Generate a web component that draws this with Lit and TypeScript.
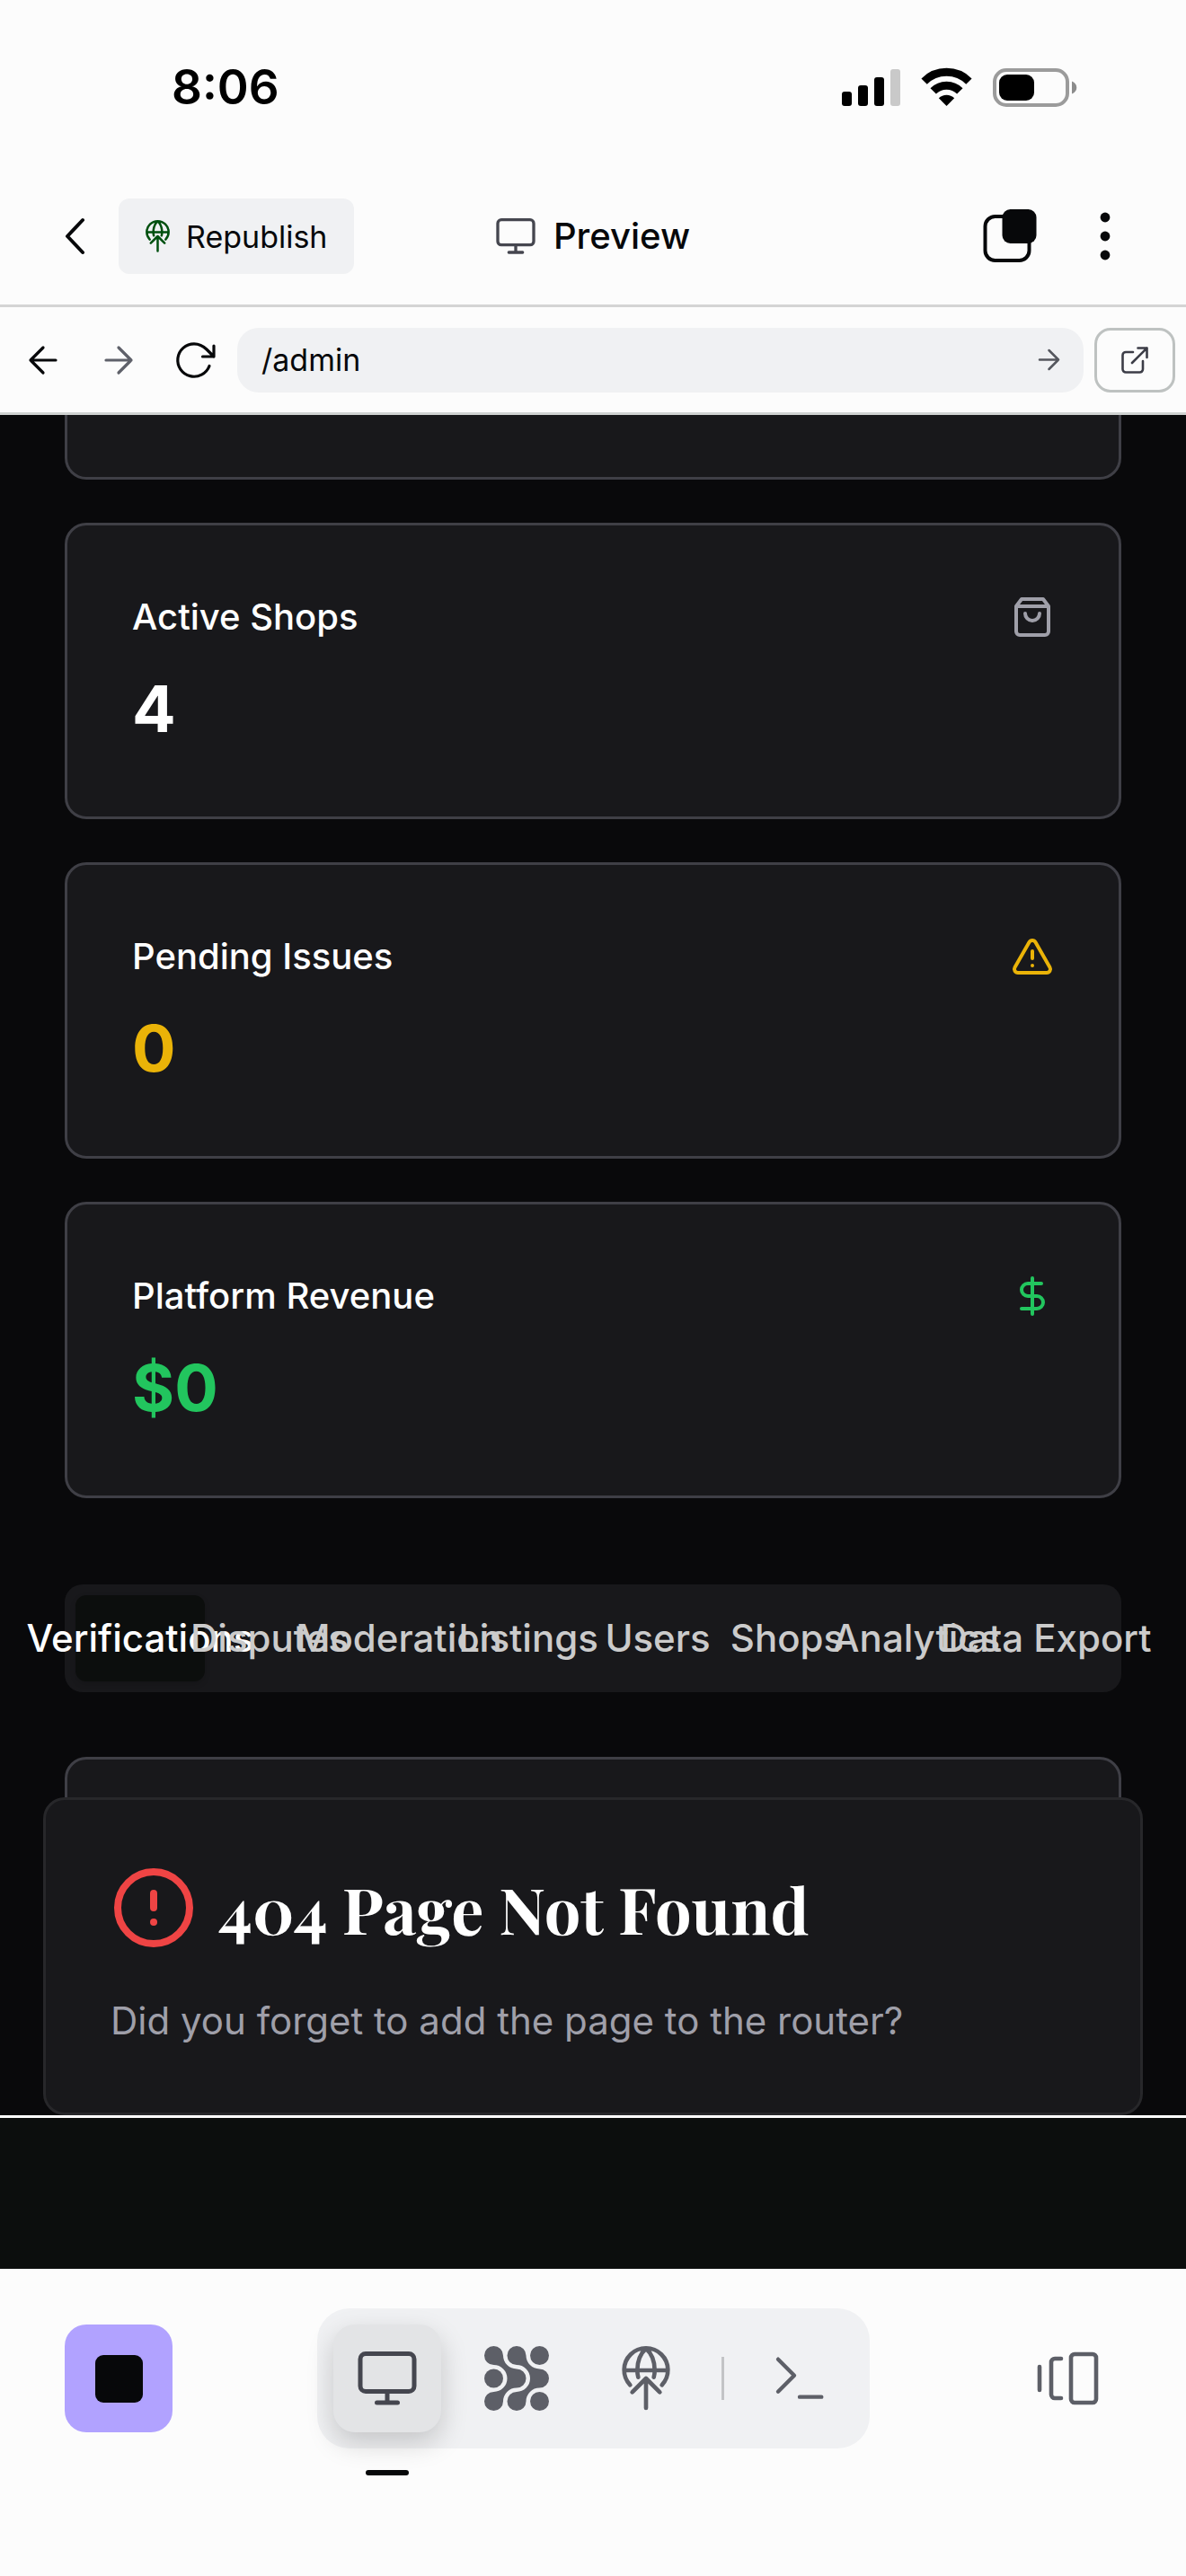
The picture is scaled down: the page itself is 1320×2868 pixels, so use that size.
import { LitElement, html, svg, css, type SVGTemplateResult } from "lit";
import { customElement, state } from "lit/decorators.js";
import { classMap } from "lit/directives/class-map.js";

interface IconDef {
  box: string;
  width: number;
  height: number;
  stroke: number;
  body: SVGTemplateResult;
}

const monitorBody = svg`<rect x="3" y="2.5" width="60" height="42" rx="6"/><path d="M33 45v12M21.5 57h23"/>`;
const publishBody = svg`<path d="M27 130A73 73 0 1 1 133 130M7 81h146M80 8C62 24 51 50 51 81C51 90 52 97 54 104M80 8C98 24 109 50 109 81C109 90 108 97 106 104M80 207V108M34 154L80 108L126 154"/>`;
const forwardBody = svg`<path d="M4 18h28M18 4l14 14l-14 14"/>`;
const blob = "M10.5 0A10.5 10.5 0 0 1 21 10.5A15 15 0 0 0 36 25.5A10.5 10.5 0 0 1 36 46.5A15 15 0 0 0 21 61.5A10.5 10.5 0 1 1 10.5 51A15 15 0 0 0 10.5 21A10.5 10.5 0 1 1 10.5 0Z";

const icons: Record<string, IconDef> = {
  signal: {
    box: "0 0 65 42", width: 65, height: 42, stroke: 0,
    body: svg`<g fill="#000"><rect y="26" width="11" height="16" rx="3"/><rect x="18" y="19" width="11" height="23" rx="3"/><rect x="36" y="10" width="11" height="32" rx="3"/><rect x="54" y="1" width="11" height="41" rx="3" fill="#c9c9c9"/></g>`,
  },
  wifi: {
    box: "0 0 57 42", width: 57, height: 42, stroke: 0,
    body: svg`<g stroke="#000" stroke-width="9" stroke-linecap="butt"><path d="M3.6 14.6A35.4 35.4 0 0 1 53.4 14.6"/><path d="M13.7 25.4A20.8 20.8 0 0 1 43.3 25.4"/></g><path fill="#000" d="M28.5 42L19.8 33.3A12.5 12.5 0 0 1 37.2 33.3Z"/>`,
  },
  battery: {
    box: "0 0 93 43", width: 93, height: 43, stroke: 0,
    body: svg`<rect x="2" y="2" width="81" height="39" rx="13" stroke="#9b9b9b" stroke-width="4"/><rect x="7" y="7" width="39" height="29" rx="9" fill="#000"/><path fill="#8c8c8c" d="M88 14.500C95 17 95 26 88 28.500Z"/>`,
  },
  chevron: { box: "0 0 24 42", width: 24, height: 42, stroke: 4, body: svg`<path d="M20 3L3 21l17 18"/>` },
  publishSmall: { box: "0 0 160 216", width: 27, height: 36, stroke: 15, body: publishBody },
  monitorSmall: { box: "0 0 66 60", width: 44, height: 40, stroke: 5, body: monitorBody },
  copies: {
    box: "0 0 60 60", width: 60, height: 60, stroke: 4,
    body: svg`<rect x="2.500" y="8" width="49" height="49" rx="11"/><rect x="21.500" y="0" width="38" height="38" rx="9" fill="currentColor" stroke="none"/>`,
  },
  more: {
    box: "0 0 12 54", width: 12, height: 54, stroke: 0,
    body: svg`<g fill="currentColor"><circle cx="6" cy="6" r="5.400"/><circle cx="6" cy="27" r="5.400"/><circle cx="6" cy="48" r="5.400"/></g>`,
  },
  back: { box: "0 0 36 36", width: 36, height: 36, stroke: 3.2, body: svg`<path d="M32 18H4M18 4L4 18l14 14"/>` },
  forward: { box: "0 0 36 36", width: 36, height: 36, stroke: 3.2, body: forwardBody },
  go: { box: "0 0 36 36", width: 27, height: 27, stroke: 3.4, body: forwardBody },
  refresh: {
    box: "0 0 48 48", width: 48, height: 48, stroke: 3.2,
    body: svg`<path d="M41 30.500A18.200 18.200 0 1 1 24 5.800C30 5.800 34.500 8.500 38 12L46 20M46 8v12H33.500"/>`,
  },
  external: {
    box: "0 0 30 30", width: 30, height: 30, stroke: 2.6,
    body: svg`<path d="M13 6H5A3.500 3.500 0 0 0 1.500 9.500V25A3.500 3.500 0 0 0 5 28.500H20.500A3.500 3.500 0 0 0 24 25V16M12 18L28.500 1.500M18.500 1.500h10v10.500"/>`,
  },
  bag: {
    box: "0 0 24 24", width: 48, height: 48, stroke: 2,
    body: svg`<path d="M6 2L3 6v14a2 2 0 0 0 2 2h14a2 2 0 0 0 2-2V6l-3-4ZM3 6h18M16 10a4 4 0 0 1-8 0"/>`,
  },
  warning: {
    box: "0 0 24 24", width: 48, height: 48, stroke: 2,
    body: svg`<path d="M21.730 18l-8-14a2 2 0 0 0-3.480 0l-8 14A2 2 0 0 0 4 21h16a2 2 0 0 0 1.730-3ZM12 9v4M12 17h.01"/>`,
  },
  dollar: {
    box: "0 0 24 24", width: 48, height: 48, stroke: 2,
    body: svg`<path d="M12 2v20M17 5H9.500a3.500 3.500 0 0 0 0 7h5a3.500 3.500 0 0 1 0 7H6"/>`,
  },
  alert: {
    box: "0 0 24 24", width: 96, height: 96, stroke: 2,
    body: svg`<circle cx="12" cy="12" r="10"/><path d="M12 8v4M12 16h.01"/>`,
  },
  monitor: { box: "0 0 66 60", width: 66, height: 60, stroke: 5, body: monitorBody },
  agent: {
    box: "0 0 72 72", width: 72, height: 72, stroke: 0,
    body: svg`<g fill="currentColor"><path d=${blob}/><path transform="translate(25.500 0)" d=${blob}/><circle cx="10.500" cy="36" r="10.500"/><circle cx="61.500" cy="10.500" r="10.500"/><circle cx="61.500" cy="61.500" r="10.500"/></g>`,
  },
  publish: { box: "0 0 160 216", width: 54, height: 72, stroke: 14, body: publishBody },
  terminal: { box: "0 0 160 144", width: 54, height: 48, stroke: 13, body: svg`<path d="M8 8L62 62L8 116M80 134h73"/>` },
  panels: {
    box: "0 0 70 60", width: 70, height: 60, stroke: 4.6,
    body: svg`<rect x="39" y="3" width="28" height="54" rx="4"/><path d="M28 8H21a4 4 0 0 0-4 4V48a4 4 0 0 0 4 4H28M4 17V43"/>`,
  },
};

const icon = (name: string) => {
  const i = icons[name];
  return html`<svg class="icon" aria-hidden="true" viewBox=${i.box} width=${i.width} height=${i.height}
    fill="none" stroke=${i.stroke ? "currentColor" : "none"} stroke-width=${i.stroke}
    stroke-linecap="round" stroke-linejoin="round">${i.body}</svg>`;
};

const stats = [
  { label: "Active Shops", value: "4", icon: "bag", tone: "plain" },
  { label: "Pending Issues", value: "0", icon: "warning", tone: "amber" },
  { label: "Platform Revenue", value: "$0", icon: "dollar", tone: "green" },
];

const tabs = ["Verifications", "Disputes", "Moderation", "Listings", "Users", "Shops", "Analytics", "Data Export"];

@customElement("app-root")
export class AppRoot extends LitElement {
  @state() private tab = 0;
  @state() private tool = "monitor";

  static styles = css`
    :host {
      display: flex;
      flex-direction: column;
      min-height: 100vh;
      background: #fcfcfc;
      color: #07080a;
      font-family: Inter, "Liberation Sans", sans-serif;
    }
    * { box-sizing: border-box; }
    h1, h2, p { margin: 0; }
    button, input {
      margin: 0;
      padding: 0;
      border: 0;
      background: none;
      color: inherit;
      font: inherit;
    }
    button, a {
      display: flex;
      align-items: center;
      justify-content: center;
      cursor: pointer;
    }
    .icon { display: block; flex: none; overflow: visible; }

    .status {
      display: flex;
      align-items: center;
      justify-content: space-between;
      padding: 57px 122px 50px 191px;
      color: #000;
    }
    .time { font-size: 53px; line-height: 80px; font-weight: 600; }
    .radios { display: flex; align-items: center; gap: 23px; }

    .header {
      display: grid;
      grid-template-columns: 1fr auto 1fr;
      align-items: center;
      padding: 34px 60px;
      border-bottom: 3px solid #d4d4d4;
    }
    .start { display: flex; align-items: center; gap: 24px; }
    .back { width: 48px; height: 84px; }
    .republish {
      gap: 18px;
      height: 84px;
      padding: 0 30px;
      border-radius: 12px;
      background: #f0f1f3;
      font-size: 34px;
    }
    .republish .icon { color: #00500f; }
    .title { display: flex; align-items: center; gap: 20px; }
    .title .icon { color: #45464f; }
    .title h1 { font-size: 40px; line-height: 60px; font-weight: 500; }
    .end { display: flex; justify-content: flex-end; align-items: center; gap: 46px; }
    .end button { width: 60px; height: 84px; }

    .address {
      display: flex;
      align-items: center;
      padding: 22px 12px 22px 6px;
      border-bottom: 3px solid #d0d3d2;
    }
    .address .nav { width: 84px; height: 73px; }
    .address .muted { color: #5f616a; }
    .field {
      display: flex;
      flex: 1;
      align-items: center;
      min-width: 0;
      height: 72px;
      margin: 0 12px 0 6px;
      padding: 0 15px 0 27px;
      border-radius: 24px;
      background: #f0f1f3;
    }
    .field input { flex: 1; min-width: 0; font-size: 34px; line-height: 48px; outline: none; }
    .go { width: 48px; height: 48px; color: #55575e; }
    .external {
      width: 90px;
      height: 72px;
      border: 3px solid #bec2c1;
      border-radius: 18px;
      color: #3c3d47;
    }

    .viewport {
      position: relative;
      display: flex;
      flex: 1;
      flex-direction: column;
      padding: 0 72px;
      background: #09090b;
      color: #fff;
      overflow: hidden;
    }
    .stats { display: flex; flex-direction: column; gap: 48px; }
    .card {
      padding: 72px;
      border: 3px solid #3f3f46;
      border-radius: 24px;
      background: #18181b;
    }
    .clipped { padding: 0; height: 72px; border-top: 0; border-radius: 0 0 24px 24px; }
    .card-head { display: flex; align-items: center; justify-content: space-between; }
    .card h2 { font-size: 40px; line-height: 60px; font-weight: 500; }
    .value { margin-top: 24px; font-size: 72px; line-height: 96px; font-weight: 700; }
    .plain .icon { color: #9f9fa9; }
    .amber .icon, .amber .value { color: #eab308; }
    .green .icon, .green .value { color: #22c55e; }

    .tabs {
      display: grid;
      grid-template-columns: repeat(8, minmax(0, 1fr));
      margin: 96px 0 72px;
      padding: 12px;
      border-radius: 20px;
      background: #18181b;
    }
    .tab {
      min-width: 0;
      height: 96px;
      border-radius: 12px;
      color: #cbcbcb;
      font-size: 42px;
      line-height: 60px;
      font-weight: 500;
      white-space: nowrap;
    }
    .tab.active { background: #0c0e0d; color: #fff; box-shadow: 0 3px 6px rgba(0, 0, 0, 0.15); }
    .panel { flex: 1; min-height: 360px; }

    .missing {
      position: absolute;
      right: 48px;
      bottom: 0;
      left: 48px;
      padding: 72px;
      border: 3px solid #27272a;
      border-radius: 24px;
      background: #18181b;
    }
    .missing-head { display: flex; align-items: center; gap: 24px; }
    .missing-head .icon { color: #ef4444; }
    .missing h2 {
      font-family: "Playfair Display", "Liberation Serif", serif;
      font-size: 72px;
      line-height: 96px;
      font-weight: 700;
    }
    .missing p { margin-top: 48px; color: #9f9fa9; font-size: 42px; line-height: 60px; }
    .band { height: 171px; border-top: 3px solid #fff; background: #0c0e0d; }

    .dock {
      display: grid;
      grid-template-columns: 1fr auto 1fr;
      align-items: center;
      padding: 44px 72px 142px;
    }
    .stop { width: 120px; height: 120px; border-radius: 24px; background: #b1a2ff; }
    .stop span { width: 53px; height: 53px; border-radius: 9px; background: #07080a; }
    .tools {
      display: flex;
      align-items: center;
      gap: 24px;
      padding: 18px;
      border-radius: 36px;
      background: #f0f1f3;
    }
    .tool { position: relative; width: 120px; height: 120px; border-radius: 24px; color: #5d5f67; }
    .tool.active { background: #e3e4e6; color: #45464f; box-shadow: 0 12px 30px rgba(0, 0, 0, 0.18); }
    .tool.active::after {
      content: "";
      position: absolute;
      top: 162px;
      left: 36px;
      width: 48px;
      height: 6px;
      border-radius: 3px;
      background: #07080a;
    }
    .divider { width: 3px; height: 48px; background: #c3c4c6; }
    .panels { justify-self: end; width: 120px; height: 120px; color: #5d5f67; }
  `;

  private toolButton(name: string, label: string) {
    return html`<button class=${classMap({ tool: true, active: this.tool === name })} aria-label=${label}
      @click=${() => (this.tool = name)}>${icon(name)}</button>`;
  }

  render() {
    return html`
      <div class="status">
        <span class="time">8:06</span>
        <div class="radios">${icon("signal")}${icon("wifi")}${icon("battery")}</div>
      </div>

      <header class="header">
        <div class="start">
          <button class="back" aria-label="Back">${icon("chevron")}</button>
          <button class="republish">${icon("publishSmall")}<span>Republish</span></button>
        </div>
        <div class="title">${icon("monitorSmall")}<h1>Preview</h1></div>
        <div class="end">
          <button aria-label="Open tabs">${icon("copies")}</button>
          <button aria-label="More options">${icon("more")}</button>
        </div>
      </header>

      <nav class="address" aria-label="Page address">
        <button class="nav" aria-label="Go back">${icon("back")}</button>
        <button class="nav muted" aria-label="Go forward">${icon("forward")}</button>
        <button class="nav" aria-label="Reload">${icon("refresh")}</button>
        <div class="field">
          <input type="text" aria-label="Path" .value=${"/admin"} />
          <button class="go" aria-label="Go">${icon("go")}</button>
        </div>
        <a class="external" href="#" aria-label="Open in a new tab">${icon("external")}</a>
      </nav>

      <main class="viewport">
        <section class="stats">
          <div class="card clipped"></div>
          ${stats.map(
            (s) => html`<article class="card ${s.tone}">
              <div class="card-head"><h2>${s.label}</h2>${icon(s.icon)}</div>
              <div class="value">${s.value}</div>
            </article>`
          )}
        </section>
        <div class="tabs" role="tablist">
          ${tabs.map(
            (t, i) => html`<button role="tab" aria-selected=${i === this.tab ? "true" : "false"}
              class=${classMap({ tab: true, active: i === this.tab })}
              @click=${() => (this.tab = i)}>${t}</button>`
          )}
        </div>
        <div class="card panel" role="tabpanel"></div>
        <section class="missing">
          <div class="missing-head">${icon("alert")}<h2>404 Page Not Found</h2></div>
          <p>Did you forget to add the page to the router?</p>
        </section>
      </main>
      <div class="band"></div>

      <footer class="dock">
        <button class="stop" aria-label="Stop"><span></span></button>
        <div class="tools">
          ${this.toolButton("monitor", "Preview")}
          ${this.toolButton("agent", "Agent")}
          ${this.toolButton("publish", "Publish")}
          <span class="divider"></span>
          ${this.toolButton("terminal", "Console")}
        </div>
        <button class="panels" aria-label="Switch panels">${icon("panels")}</button>
      </footer>
    `;
  }
}
